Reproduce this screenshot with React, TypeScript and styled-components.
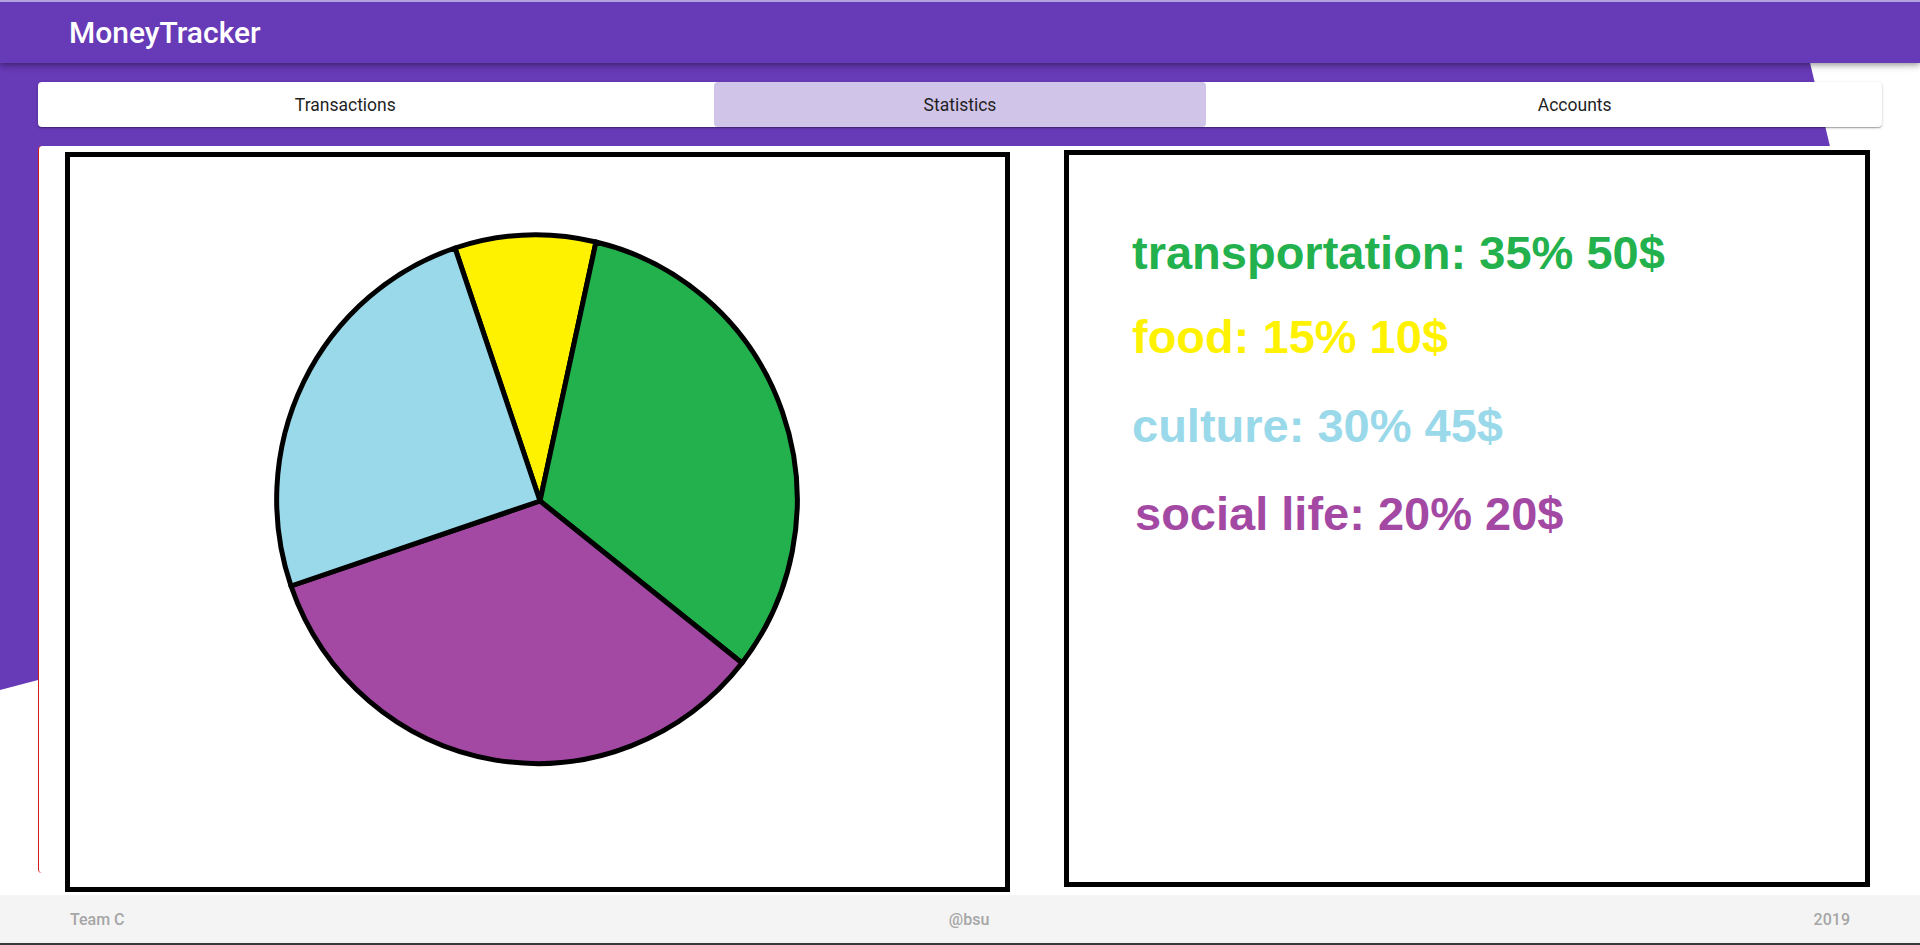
import React from "react";
import styled, { createGlobalStyle } from "styled-components";

const GlobalStyle = createGlobalStyle`
  html, body {
    margin: 0;
    padding: 0;
    background: #ffffff;
  }
  body {
    font-family: Roboto, "Noto Sans", sans-serif;
  }
  * {
    box-sizing: border-box;
  }
`;

const Page = styled.div`
  position: relative;
  min-height: 945px;
  display: flex;
  flex-direction: column;
  overflow: hidden;
`;

// slanted purple shape that sits behind the tabs and the card
const Backdrop = styled.div`
  position: absolute;
  inset: 0;
  z-index: 0;
  background: #673ab7;
  clip-path: polygon(0 0, 1795px 0, 1844px 205px, 0 690px);
`;

const Header = styled.header`
  position: relative;
  z-index: 2;
  height: 63px;
  display: flex;
  align-items: center;
  padding-left: 69px;
  background: #673ab7;
  border-top: 2px solid #b3a2dd;
  box-shadow: 0 2px 4px -1px rgba(0, 0, 0, 0.2), 0 4px 5px 0 rgba(0, 0, 0, 0.14),
    0 1px 10px 0 rgba(0, 0, 0, 0.12);
`;

const Title = styled.h1`
  margin: 0;
  color: #ffffff;
  font-size: 30px;
  font-weight: 500;
  letter-spacing: 0;
`;

const Main = styled.main`
  position: relative;
  z-index: 1;
  flex: 1;
  display: flex;
  flex-direction: column;
  gap: 19px;
  padding: 19px 38px 22px;
`;

const TabBar = styled.nav`
  height: 45px;
  display: grid;
  grid-template-columns: repeat(3, 1fr);
  background: #ffffff;
  border-radius: 4px;
  box-shadow: 0 1px 3px 0 rgba(0, 0, 0, 0.2), 0 1px 1px 0 rgba(0, 0, 0, 0.14),
    0 2px 1px -1px rgba(0, 0, 0, 0.12);
`;

const Tab = styled.div`
  display: flex;
  justify-content: center;
  align-items: stretch;
`;

const TabFace = styled.span<{ $active?: boolean }>`
  width: 80%;
  display: flex;
  align-items: center;
  justify-content: center;
  border-radius: 4px;
  background: ${(p) => (p.$active ? "#d1c4e9" : "transparent")};
  color: #1f1f1f;
  font-size: 17.5px;
`;

const Card = styled.section`
  height: 727px;
  display: flex;
  align-items: flex-start;
  gap: 54px;
  padding: 4px 0 0 26px;
  background: #ffffff;
  border-radius: 4px;
  border-left: 1px solid #d01c1c;
`;

const Panel = styled.div<{ $w: number; $h: number; $top?: number }>`
  flex: none;
  width: ${(p) => p.$w}px;
  height: ${(p) => p.$h}px;
  margin-top: ${(p) => p.$top ?? 0}px;
  border: 5px solid #000000;
  background: #ffffff;
`;

const Legend = styled.div`
  display: flex;
  flex-direction: column;
  padding: 74px 0 0 63px;
`;

const LegendRow = styled.div<{ $color: string; $top: number; $indent?: number }>`
  margin-top: ${(p) => p.$top}px;
  padding-left: ${(p) => p.$indent ?? 0}px;
  color: ${(p) => p.$color};
  font-family: "Liberation Sans", Arial, sans-serif;
  font-weight: 700;
  font-size: 47px;
  line-height: 47px;
  white-space: nowrap;
`;

const Footer = styled.footer`
  position: relative;
  z-index: 2;
  height: 50px;
  display: flex;
  align-items: center;
  justify-content: space-between;
  padding: 0 70px;
  background: #f4f4f4;
  border-bottom: 2px solid #3a3a3a;
  color: #a6a6a6;
  font-size: 16px;
  font-weight: 500;
`;

const categories = [
  { label: "transportation: 35% 50$", color: "#22b14c", top: 0 },
  { label: "food: 15% 10$", color: "#fff200", top: 37 },
  { label: "culture: 30% 45$", color: "#99d9ea", top: 42 },
  { label: "social life: 20% 20$", color: "#a349a4", top: 41, indent: 3 },
];

const hub = "470 344";
const rx = 261;
const ry = 265;
const edges = ["385 91", "526 85", "672 506", "221 429"];
const sliceColors = ["#fff200", "#22b14c", "#a349a4", "#99d9ea"];

const PieChart = () => (
  <svg width="935" height="730" viewBox="0 0 935 730">
    {sliceColors.map((fill, i) => (
      <path
        key={fill}
        d={`M ${hub} L ${edges[i]} A ${rx} ${ry} 0 0 1 ${edges[(i + 1) % 4]} Z`}
        fill={fill}
        stroke="#000"
        strokeWidth={5}
        strokeLinejoin="round"
      />
    ))}
  </svg>
);

const App = () => {
  return (
    <Page>
      <GlobalStyle />
      <Backdrop />
      <Header>
        <Title>MoneyTracker</Title>
      </Header>
      <Main>
        <TabBar>
          <Tab>
            <TabFace>Transactions</TabFace>
          </Tab>
          <Tab>
            <TabFace $active>Statistics</TabFace>
          </Tab>
          <Tab>
            <TabFace>Accounts</TabFace>
          </Tab>
        </TabBar>
        <Card>
          <Panel $w={945} $h={740} $top={2}>
            <PieChart />
          </Panel>
          <Panel $w={806} $h={737}>
            <Legend>
              {categories.map((c) => (
                <LegendRow key={c.label} $color={c.color} $top={c.top} $indent={c.indent}>
                  {c.label}
                </LegendRow>
              ))}
            </Legend>
          </Panel>
        </Card>
      </Main>
      <Footer>
        <span>Team C</span>
        <span>@bsu</span>
        <span>2019</span>
      </Footer>
    </Page>
  );
};

export default App;
